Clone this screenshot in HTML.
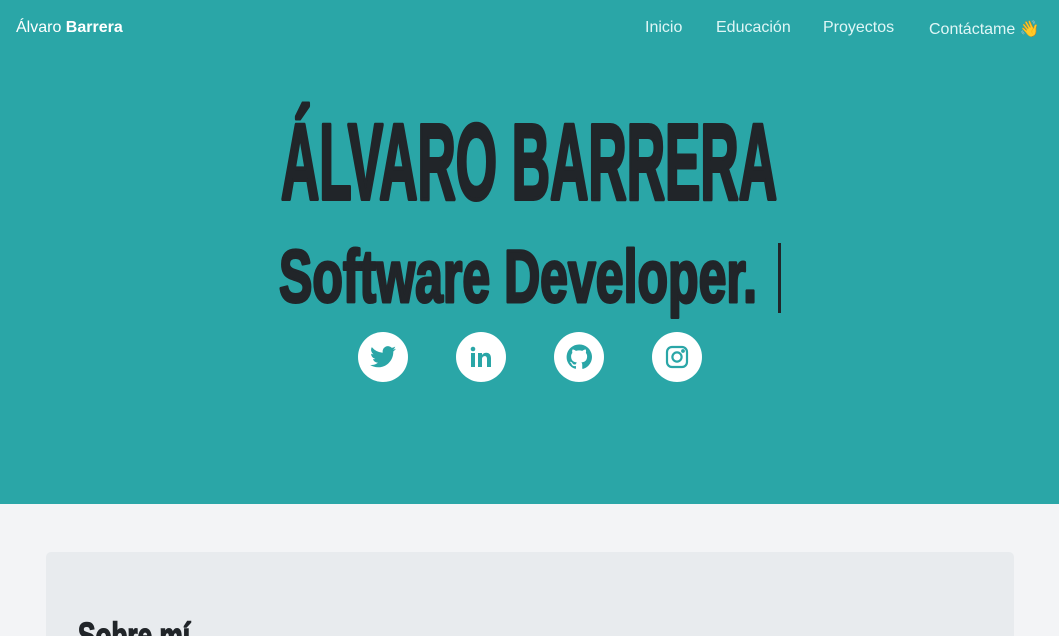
<!DOCTYPE html>
<html><head><meta charset="utf-8"><style>
*{margin:0;padding:0;box-sizing:border-box}
html,body{width:1059px;height:636px;overflow:hidden}
body{background:#f3f4f6;font-family:"Liberation Sans",sans-serif;position:relative}
.hero{position:absolute;left:0;top:0;width:1059px;height:504px;background:#2aa6a7}
.nav{position:absolute;top:19px;font-size:16px;color:#dff6f6}
.card{position:absolute;left:46px;top:552px;width:968px;height:84px;background:#e8ebee;border-radius:5px 5px 0 0}
.ic{position:absolute;top:332px;width:50px;height:50px;border-radius:50%;background:#fff;display:flex;align-items:center;justify-content:center}
</style></head><body>
<div class="hero"></div>
<div class="nav" style="left:16px;color:#fff">Álvaro <b style="font-weight:700">Barrera</b></div>
<div class="nav" style="left:645px">Inicio</div>
<div class="nav" style="left:716px">Educación</div>
<div class="nav" style="left:823px">Proyectos</div>
<div class="nav" style="left:929px">Contáctame <span style="color:#f5b82e">👋</span></div>
<svg style="position:absolute;left:0;top:0" width="1059" height="636">
<text x="281" y="199" font-family="Liberation Sans Narrow, Liberation Sans, sans-serif" font-weight="bold" font-size="108" fill="#212529" stroke="#212529" stroke-width="4" stroke-linejoin="round" textLength="496" lengthAdjust="spacingAndGlyphs">ÁLVARO BARRERA</text>
<text x="279" y="302" font-family="Liberation Sans Narrow, Liberation Sans, sans-serif" font-weight="bold" font-size="74" fill="#212529" stroke="#212529" stroke-width="3" stroke-linejoin="round" textLength="478" lengthAdjust="spacingAndGlyphs">Software Developer.</text>
<rect x="778" y="243" width="3" height="70" fill="#212529"/>
</svg>
<div class="ic" style="left:358px"><svg width="26" height="22" viewBox="0 0 24 20"><path fill="#2aa6a7" d="M24 2.4a10 10 0 0 1-2.8.8A5 5 0 0 0 23.3.4a10 10 0 0 1-3.1 1.2A4.9 4.9 0 0 0 11.8 6 14 14 0 0 1 1.7.9a4.9 4.9 0 0 0 1.5 6.6 4.9 4.9 0 0 1-2.2-.6 4.9 4.9 0 0 0 3.9 4.9 5 5 0 0 1-2.2.1 4.9 4.9 0 0 0 4.6 3.4A9.9 9.9 0 0 1 0 17.3 14 14 0 0 0 7.5 19.5c9.1 0 14-7.5 14-14v-.6A10 10 0 0 0 24 2.4z"/></svg></div>
<div class="ic" style="left:456px"><svg width="22" height="22" viewBox="0 0 22 22"><rect x="1" y="7" width="4" height="14" fill="#2aa6a7"/><circle cx="3" cy="3" r="2.3" fill="#2aa6a7"/><path fill="#2aa6a7" d="M8 7h4v2c1-1.6 2.6-2.3 4.3-2.3 3 0 4.7 2 4.7 5.6V21h-4v-8c0-2-.8-2.9-2.3-2.9S12 11.2 12 13v8H8z"/></svg></div>
<div class="ic" style="left:554px"><svg width="26" height="26" viewBox="0 0 24 24"><path fill="#2aa6a7" d="M12 .5a11.5 11.5 0 0 0-3.6 22.4c.6.1.8-.3.8-.6v-2c-3.2.7-3.9-1.5-3.9-1.5-.5-1.3-1.3-1.7-1.3-1.7-1-.7.1-.7.1-.7 1.2.1 1.8 1.2 1.8 1.200 1 1.8 2.7 1.3 3.4 1 .1-.8.4-1.3.7-1.6-2.6-.3-5.3-1.3-5.3-5.7 0-1.3.5-2.300 1.2-3.1-.1-.3-.5-1.5.1-3.1 0 0 1-.3 3.2 1.2a11 11 0 0 1 5.8 0c2.2-1.5 3.2-1.2 3.2-1.2.6 1.6.2 2.8.1 3.1.7.8 1.2 1.8 1.2 3.1 0 4.4-2.7 5.4-5.3 5.7.4.4.8 1.1.8 2.2v3.2c0 .3.2.7.8.6A11.5 11.5 0 0 0 12 .5z"/></svg></div>
<div class="ic" style="left:652px"><svg width="24" height="24" viewBox="0 0 24 24" fill="none" stroke="#2aa6a7" stroke-width="2.2"><rect x="2" y="2" width="20" height="20" rx="5"/><circle cx="12" cy="12" r="4.6"/><circle cx="18" cy="6" r=".8" fill="#2aa6a7"/></svg></div>
<div class="card"></div>
<svg style="position:absolute;left:0;top:0" width="1059" height="636">
<text x="78" y="648" font-family="Liberation Sans Narrow, Liberation Sans, sans-serif" font-weight="bold" font-size="36" fill="#212529" stroke="#212529" stroke-width="1.5" textLength="112" lengthAdjust="spacingAndGlyphs">Sobre mí</text>
</svg>
</body></html>
